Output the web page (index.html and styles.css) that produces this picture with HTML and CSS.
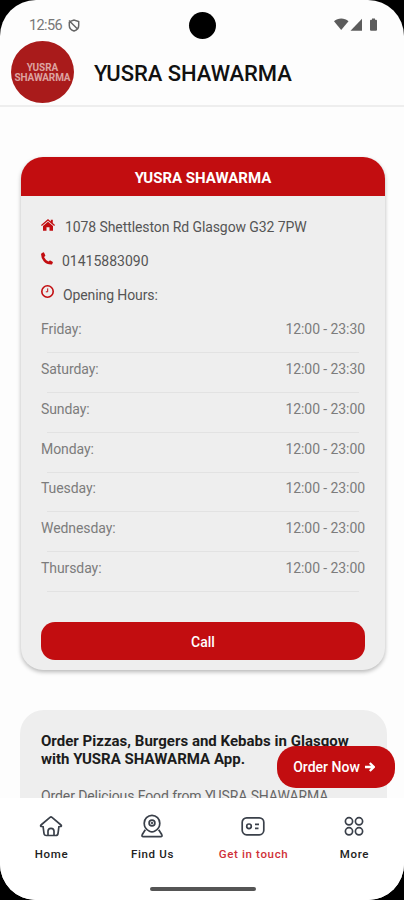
FILE: index.html
```html
<!DOCTYPE html>
<html lang="en">
<head>
<meta charset="utf-8">
<title>YUSRA SHAWARMA</title>
<link rel="stylesheet" href="styles.css">
</head>
<body>
<div class="screen">
  <div class="status">
    <span class="time">12:56</span>
    <svg class="shield" width="12" height="13" viewBox="0 0 12 13" fill="none" stroke="#666" stroke-width="1.5"><path d="M2.200 2.400 6 1l4.700 1.500v4C10.700 9 9 11 6 12 3 11 1.300 9 1.300 6.500V3M1 1.500l9 9"/></svg>
    <span class="camera"></span>
    <svg class="signals" width="44" height="14" viewBox="0 0 44 14" fill="#5c5c5c"><path d="M0 3.300C4-.4 10.500-.4 14.500 3.300L7.200 12z"/><path d="M16.500 12.800 28 .8v12z"/><path d="M37 1.800h1V.4h3v1.400h1q1 0 1 1v9q0 1-1 1h-5q-1 0-1-1v-9q0-1 1-1z"/></svg>
  </div>
  <header class="header">
    <div class="logo"><span class="logo-top">YUSRA</span><span class="logo-bottom">SHAWARMA</span></div>
    <h1>YUSRA SHAWARMA</h1>
  </header>
  <main class="content">
    <section class="card contact">
      <h2>YUSRA SHAWARMA</h2>
      <div class="info address">
        <svg width="14" height="12" viewBox="0 0 14 12" fill="#c20d10"><path d="M7 0 9.800 2.400V.7h2v3.400L14 6l-.8 1L7 1.800.8 7 0 6z"/><path d="M7 2.700 12 7v4.800H8.500V8.200h-3v3.600H2V7z"/></svg>
        <span>1078 Shettleston Rd Glasgow G32 7PW</span>
      </div>
      <div class="info phone">
        <svg width="12" height="13" viewBox="0 0 12 13" fill="#c20d10"><path d="M.4 1.600 1.900.5q.8-.5 1.200.3L4.300 3.200q.2.600-.3 1L3 5Q4.500 8.200 7.400 9.600l1-.9q.5-.4 1-.1l2.100 1.200q.5.300.3.900l-.6 1.200q-.3.700-1 .6Q5.500 12.400 2.700 9.200 0 6 .1 2.300q0-.4.3-.7z"/></svg>
        <span>01415883090</span>
      </div>
      <div class="info opening">
        <svg width="13" height="13" viewBox="0 0 13 13" fill="none" stroke="#c20d10"><circle cx="6.500" cy="6.500" r="5.700" stroke-width="1.600"/><path d="M6.700 3.400v3.400H4.800" stroke-width="1"/></svg>
        <span>Opening Hours:</span>
      </div>
      <dl class="hours">
        <div><dt>Friday:</dt><dd>12:00 - 23:30</dd></div>
        <div><dt>Saturday:</dt><dd>12:00 - 23:30</dd></div>
        <div><dt>Sunday:</dt><dd>12:00 - 23:00</dd></div>
        <div><dt>Monday:</dt><dd>12:00 - 23:00</dd></div>
        <div><dt>Tuesday:</dt><dd>12:00 - 23:00</dd></div>
        <div><dt>Wednesday:</dt><dd>12:00 - 23:00</dd></div>
        <div><dt>Thursday:</dt><dd>12:00 - 23:00</dd></div>
      </dl>
      <button class="call">Call</button>
    </section>
    <section class="card about">
      <h3>Order Pizzas, Burgers and Kebabs in Glasgow<br>with YUSRA SHAWARMA App.</h3>
      <p>Order Delicious Food from YUSRA SHAWARMA</p>
    </section>
    <button class="order">Order Now
      <svg width="10" height="10" viewBox="0 0 10 10" fill="none" stroke="#fff" stroke-width="2.300"><path d="M0 5h8.500M4.800 1l4 4-4 4"/></svg>
    </button>
  </main>
  <nav class="tabs">
    <a class="tab"><svg width="24" height="24" viewBox="0 0 24 24"><path d="M3.500 12.500H2q-.8-.8 0-1.500L11 3.400q1-.8 2 0l9 7.600q.8.700 0 1.500h-1.500M4 12l1 7.500q.3 2 2.200 2h9.600q1.900 0 2.200-2l1-7.500M9 21.500v-4.200q0-3 3-3t3 3v4.200"/></svg><span>Home</span></a>
    <a class="tab"><svg width="24" height="24" viewBox="0 0 24 24"><path d="M9.500 17.300C6.500 15.800 4.200 12.800 4.200 9.200a7.800 7.800 0 0 1 15.600 0c0 3.600-2.300 6.600-5.300 8.100q-2.500 1.300-5 0z"/><circle cx="12" cy="9" r="2.900"/><circle cx="12" cy="9" r=".4"/><path d="M5.300 15.800 2.300 20.500q-1 2.200 1 2.200h17.400q2 0 1-2.200l-3-4.700"/></svg><span>Find Us</span></a>
    <a class="tab active"><svg width="24" height="24" viewBox="0 0 24 24"><rect x="1.200" y="3.800" width="21.600" height="17" rx="4.500"/><circle cx="8" cy="12.300" r="2.300"/><path d="M14 10.300h4M14 14.300h3.500"/></svg><span>Get in touch</span></a>
    <a class="tab"><svg width="24" height="24" viewBox="0 0 24 24"><circle cx="7" cy="7.300" r="3.600"/><circle cx="17" cy="7.300" r="3.600"/><circle cx="7" cy="17.300" r="3.600"/><circle cx="17" cy="17.300" r="3.600"/></svg><span>More</span></a>
    <div class="gesture"></div>
  </nav>
</div>
</body>
</html>
```
FILE: styles.css
```css
* { box-sizing: border-box; }
body { margin: 0; background: #000; font-family: Roboto, "Liberation Sans", sans-serif; }
h1, h2, h3, p, dl, dd { margin: 0; }
button { border: 0; padding: 0; font: inherit; color: #fff; background: #c20d10; }
svg { display: block; flex: none; }

.screen { width: 404px; height: 900px; display: flex; flex-direction: column; overflow: hidden; background: #fdfdfd; border-radius: 36px; }
.status { position: relative; height: 40px; flex: none; display: flex; align-items: center; padding: 10px 26px 0 29px; }
.time { font-size: 14.500px; color: #777; letter-spacing: -.6px; width: 39px; white-space: nowrap; }
.camera { position: absolute; left: 189px; top: 12px; width: 27px; height: 27px; border-radius: 50%; background: #000; }
.signals { margin-left: auto; }

.header { height: 67px; flex: none; display: flex; align-items: flex-start; padding: 1px 11px 0; border-bottom: 2px solid #eee; }
.logo { width: 63px; height: 62px; padding-top: 2px; border-radius: 50%; background: #a91b1b; color: #dda3a0; display: flex; flex-direction: column; align-items: center; justify-content: center; font-weight: 700; font-size: 10px; line-height: 10px; }
.logo-bottom { letter-spacing: -.15px; }
.header h1 { margin: 20px 0 0 20px; font-size: 22px; line-height: 26px; font-weight: 500; letter-spacing: -.05px; color: #111; white-space: nowrap; }

.content { position: relative; flex: 1; min-height: 0; overflow: hidden; padding: 50px 17px 0 20px; }
.card { background: #eee; border-radius: 22px; }
.contact { height: 513px; margin: 0 2px 0 1px; overflow: hidden; box-shadow: 0 2px 4px rgba(0,0,0,.28); }
.contact h2 { height: 39px; background: #c20d10; color: #fff; text-align: center; font-size: 15px; line-height: 42px; font-weight: 700; }
.info { display: flex; padding-left: 20px; height: 34px; font-size: 14px; line-height: 20px; color: #555; white-space: nowrap; }
.address { margin-top: 21px; letter-spacing: -.09px; }
.info svg { margin-top: 2px; }
.info.phone svg { margin-top: 1px; }
.info.opening svg { margin-top: 0; }
.address span { margin-left: 10px; }
.phone span { margin-left: 9px; }
.opening span { margin-left: 9px; letter-spacing: -.1px; }
.hours { padding: 0 20px; font-size: 14px; line-height: 20px; color: #7c7c7c; letter-spacing: -.08px; }
.hours div { display: flex; justify-content: space-between; height: 39.850px; background: linear-gradient(#e2e2e2, #e2e2e2) center 33px / 312px 1px no-repeat; white-space: nowrap; }
.call { display: block; width: 324px; height: 38px; margin: 24px 20px 0; border-radius: 14px; font-size: 14px; font-weight: 500; line-height: 40px; }

.about { height: 200px; margin-top: 40px; padding: 22px 21px; border-radius: 24px; }
.about h3 { font-size: 15px; line-height: 18px; font-weight: 700; letter-spacing: .02px; color: #1c1c1c; white-space: nowrap; }
.about p { margin-top: 19px; font-size: 14px; line-height: 18px; letter-spacing: -.1px; color: #666; white-space: nowrap; }
.order { position: absolute; right: 9px; bottom: 10px; width: 118px; height: 42px; padding-right: 4px; border-radius: 19px; display: flex; align-items: center; justify-content: center; gap: 5px; font-size: 14px; font-weight: 500; white-space: nowrap; }

.tabs { position: relative; height: 102px; flex: none; display: grid; grid-template-columns: repeat(4, 1fr); background: #fff; padding-top: 16px; }
.tab { display: flex; flex-direction: column; align-items: center; color: #222; font-size: 11.500px; line-height: 14px; font-weight: 500; letter-spacing: .65px; }
.tab svg { margin-left: 1px; fill: none; stroke: #3a404a; stroke-width: 1.700; }
.tab span { margin: 9px 0 0 2px; }
.active { color: #cf3038; }
.gesture { position: absolute; left: 150px; bottom: 9px; width: 106px; height: 4px; border-radius: 2px; background: #555; }
```
